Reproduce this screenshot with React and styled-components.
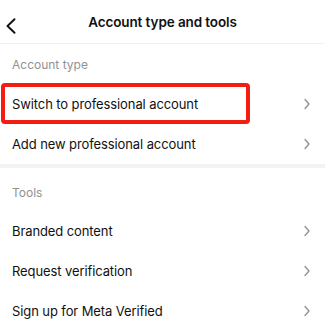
import React from 'react';
import styled, { createGlobalStyle } from 'styled-components';

const GlobalStyle = createGlobalStyle`
  body {
    margin: 0;
    background: #fff;
    font-family: Inter, "Liberation Sans", Arial, sans-serif;
    -webkit-font-smoothing: antialiased;
  }
`;

const Screen = styled.div`
  width: 325px;
  background: #fff;
  color: #111;
`;

const Header = styled.header`
  position: relative;
  height: 43px;
  display: flex;
  align-items: center;
  justify-content: center;
  border-bottom: 1px solid #f1f1f1;
`;

const BackButton = styled.button`
  position: absolute;
  left: 1px;
  top: 14px;
  width: 20px;
  height: 24px;
  padding: 0;
  border: none;
  background: none;
  display: flex;
  align-items: center;
  justify-content: center;
`;

const Title = styled.h1`
  margin: 0;
  font-size: 13.5px;
  font-weight: 600;
  letter-spacing: -0.1px;
`;

const Section = styled.section`
  & + & {
    border-top: 4px solid #f3f3f3;
  }
`;

const SectionLabel = styled.div`
  padding: ${(p) => (p.$top ? '17px 12px 10px' : '13px 12px 11px')};
  line-height: 16px;
  font-size: 12px;
  color: #929292;
`;

const Row = styled.div`
  position: relative;
  height: 40px;
  display: flex;
  align-items: center;
  justify-content: space-between;
  padding: 0 14px 0 12px;
  font-size: 13px;
  letter-spacing: -0.1px;
`;

const Highlight = styled.span`
  position: absolute;
  left: 1px;
  top: -1px;
  width: 249px;
  height: 41px;
  box-sizing: border-box;
  border: 4px solid #f41d12;
  border-radius: 4px;
  pointer-events: none;
`;

const Chevron = () => (
  <svg width="8" height="12" viewBox="0 0 8 12" fill="none">
    <path d="M2 1.5 L6 6 L2 10.5" stroke="#8f8f8f" strokeWidth="1.3" strokeLinecap="round" strokeLinejoin="round" />
  </svg>
);

const BackIcon = () => (
  <svg width="12" height="16" viewBox="0 0 12 16" fill="none">
    <path d="M9.5 1.2 L2.5 8 L9.5 14.8" stroke="#111" strokeWidth="1.9" strokeLinecap="round" strokeLinejoin="round" />
  </svg>
);

const sections = [
  {
    label: 'Account type',
    items: ['Switch to professional account', 'Add new professional account'],
  },
  {
    label: 'Tools',
    items: ['Branded content', 'Request verification', 'Sign up for Meta Verified'],
  },
];

const App = () => (
  <>
    <GlobalStyle />
    <Screen>
      <Header>
        <BackButton aria-label="Back">
          <BackIcon />
        </BackButton>
        <Title>Account type and tools</Title>
      </Header>
      {sections.map((section, si) => (
        <Section key={section.label}>
          <SectionLabel $top={si > 0}>{section.label}</SectionLabel>
          {section.items.map((item, i) => (
            <Row key={item}>
              {si === 0 && i === 0 && <Highlight />}
              <span>{item}</span>
              <Chevron />
            </Row>
          ))}
        </Section>
      ))}
    </Screen>
  </>
);

export default App;
